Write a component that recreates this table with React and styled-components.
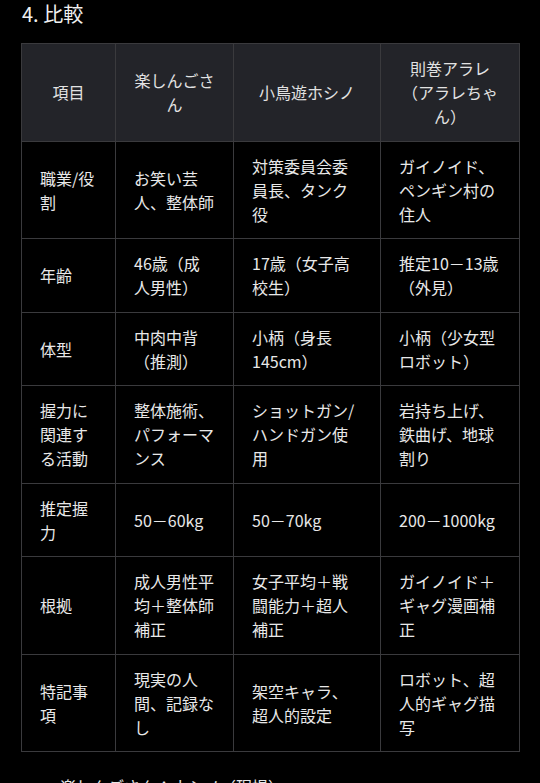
import React from "react";
import styled, { createGlobalStyle } from "styled-components";

const GlobalStyle = createGlobalStyle`
  html, body {
    margin: 0;
    padding: 0;
    background: #000;
  }
  body {
    font-family: "Noto Sans CJK JP", "Noto Sans", sans-serif;
    color: #e4e4e4;
  }
`;

//
// --- Styled Components ---
const Page = styled.div`
  padding: 0 21px;
  height: 783px;
  overflow: hidden;
`;

const Heading = styled.h3`
  margin: 0;
  padding-left: 1px;
  font-size: 20px;
  line-height: 28px;
  font-weight: 400;
  color: #f0f0f0;
`;

const Table = styled.table`
  margin-top: 15px;
  width: 498px;
  table-layout: fixed;
  border-collapse: collapse;
  font-size: 16px;
  line-height: 24.2px;
`;

const HeadCell = styled.th`
  background: #232429;
  border: 1px solid #3a3a3d;
  padding: 12px 18px;
  font-weight: 400;
  color: #e2e2e2;
  text-align: center;
  vertical-align: middle;
`;

const Cell = styled.td`
  background: #000;
  border: 1px solid #3a3a3d;
  padding: 12px 18px;
  color: #e8e8e8;
  text-align: left;
  vertical-align: middle;
  line-break: strict;
`;

const Notes = styled.ul`
  margin: 22px 0 0;
  padding-left: 39px;
  font-size: 16px;
  line-height: 24px;
  color: #e6e6e6;
`;

const columns = [94, 118, 147, 139];

const headers = ["項目", "楽しんごさん", "小鳥遊ホシノ", "則巻アラレ（アラレちゃん）"];

const rows = [
  ["職業/役割", "お笑い芸人、整体師", "対策委員会委員長、タンク役", "ガイノイド、ペンギン村の住人"],
  ["年齢", "46歳（成人男性）", "17歳（女子高校生）", "推定10－13歳（外見）"],
  ["体型", "中肉中背（推測）", "小柄（身長145cm）", "小柄（少女型ロボット）"],
  ["握力に関連する活動", "整体施術、パフォーマンス", "ショットガン/ハンドガン使用", "岩持ち上げ、鉄曲げ、地球割り"],
  ["推定握力", "50－60kg", "50－70kg", "200－1000kg"],
  ["根拠", "成人男性平均＋整体師補正", "女子平均＋戦闘能力＋超人補正", "ガイノイド＋ギャグ漫画補正"],
  ["特記事項", "現実の人間、記録なし", "架空キャラ、超人的設定", "ロボット、超人的ギャグ描写"],
];

//
// --- Comparison ---
const App = () => {
  return (
    <Page>
      <GlobalStyle />
      <Heading>4. 比較</Heading>
      <Table>
        <colgroup>
          {columns.map((w, i) => (
            <col key={i} style={{ width: w }} />
          ))}
        </colgroup>
        <thead>
          <tr>
            {headers.map(h => (
              <HeadCell key={h}>{h}</HeadCell>
            ))}
          </tr>
        </thead>
        <tbody>
          {rows.map(row => (
            <tr key={row[0]}>
              {row.map((c, i) => (
                <Cell key={i}>{c}</Cell>
              ))}
            </tr>
          ))}
        </tbody>
      </Table>
      <Notes>
        <li>楽しんごさん：ホシノ（現場）</li>
      </Notes>
    </Page>
  );
};

export default App;
